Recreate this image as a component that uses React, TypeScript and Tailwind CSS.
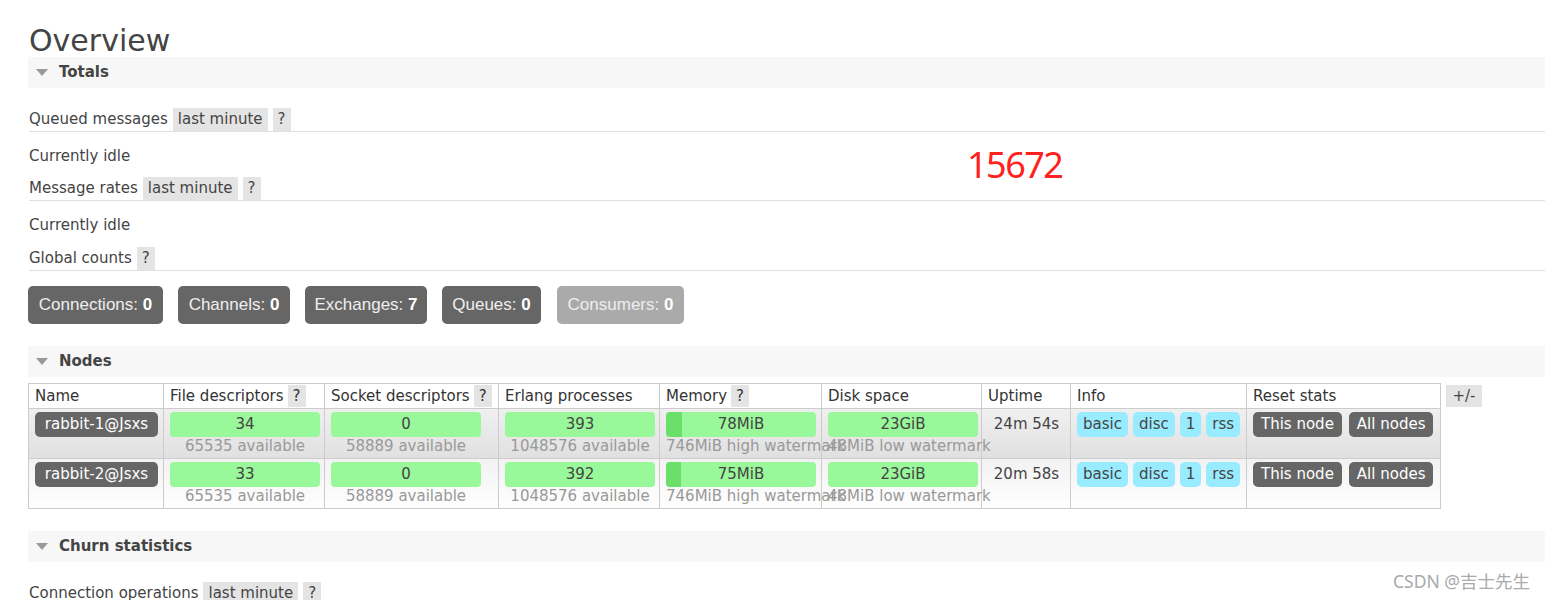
import React from "react";

const Tri = () => (
  <span className="inline-block w-0 h-0 border-l-[6.5px] border-r-[6.5px] border-t-[7px] border-l-transparent border-r-transparent border-t-[#999]" />
);

function SectionBar({ title, cls }: { title: string; cls: string }) {
  return (
    <div className={"flex items-center h-[31px] bg-[#f7f7f7] pl-[8px] " + cls}>
      <Tri />
      <span className="ml-[11px] font-bold text-[#444]">{title}</span>
    </div>
  );
}

function Chip({ children }: { children: React.ReactNode }) {
  return (
    <span className="ml-[5px] h-[23px] px-[5px] bg-[#e4e4e4] flex items-center">
      {children}
    </span>
  );
}

function LabelRow({ label, minute, cls }: { label: string; minute: boolean; cls: string }) {
  return (
    <div className={"flex items-center h-[24px] border-b border-[#e0e0e0] " + cls}>
      <span>{label}</span>
      {minute && <Chip>last minute</Chip>}
      <Chip>?</Chip>
    </div>
  );
}

function CountBtn({ label, value, cls }: { label: string; value: string; cls: string }) {
  return (
    <div
      className={
        "h-[38px] rounded-[5px] flex items-center justify-center text-[17px] text-[#eee] font-['Liberation_Sans',Arial,sans-serif] " +
        cls
      }
    >
      <span>
        {label}: <b className="text-white">{value}</b>
      </span>
    </div>
  );
}

function Bar({ value, sub, dark }: { value: string; sub: string; dark?: number }) {
  return (
    <div className="w-[150px]">
      <div className="relative h-[25px] rounded-[4px] bg-[#99f899] overflow-hidden flex items-center justify-center text-[#444]">
        {dark ? (
          <div className="absolute left-0 top-0 bottom-0 bg-[#6ae06a]" style={{ width: dark }} />
        ) : null}
        <span className="relative">{value}</span>
      </div>
      <div className="text-center whitespace-nowrap text-[#999] leading-[19px]">{sub}</div>
    </div>
  );
}

function Badge({ children, cls }: { children: React.ReactNode; cls: string }) {
  return (
    <span className={"h-[25px] rounded-[5px] flex items-center justify-center " + cls}>{children}</span>
  );
}

function HelpBox() {
  return <span className="ml-[4px] h-[22px] px-[5px] bg-[#e4e4e4] inline-flex items-center">?</span>;
}

type Node = {
  name: string;
  fd: string;
  proc: string;
  mem: string;
  dark: number;
  uptime: string;
  rowCls: string;
};

const nodes: Node[] = [
  {
    name: "rabbit-1@Jsxs",
    fd: "34",
    proc: "393",
    mem: "78MiB",
    dark: 16,
    uptime: "24m 54s",
    rowCls: "bg-linear-to-b from-[#f0f0f0] to-[#e0e0e0]",
  },
  {
    name: "rabbit-2@Jsxs",
    fd: "33",
    proc: "392",
    mem: "75MiB",
    dark: 15,
    uptime: "20m 58s",
    rowCls: "bg-linear-to-b from-[#f2f2f2] to-[#ffffff]",
  },
];

const td = "border border-[#ccc] align-top pl-[6px] pr-[5px] pt-[3px] pb-[2px]";
const th = "border border-[#ccc] text-left font-normal h-[25px] pl-[6px] p-0 text-[#333] whitespace-nowrap";

export default function App() {
  return (
    <div className="relative w-full h-[600px] overflow-hidden bg-white text-[15px] text-[#444] font-['DejaVu_Sans',Verdana,sans-serif]">
      <div className="ml-[28px] pt-[26px]">
        <h1 className="text-[30px] leading-[30px] h-[31px] pl-[1px] text-[#444]">Overview</h1>
        <SectionBar title="Totals" cls="" />

        <div className="pl-[1px]">
          <LabelRow label="Queued messages" minute={true} cls="mt-[20px]" />
          <div className="mt-[14px] h-[20px] leading-[20px]">Currently idle</div>
          <LabelRow label="Message rates" minute={true} cls="mt-[11px]" />
          <div className="mt-[14px] h-[20px] leading-[20px]">Currently idle</div>
          <LabelRow label="Global counts" minute={false} cls="mt-[12px]" />
        </div>

        <div className="flex mt-[15px]">
          <CountBtn label="Connections" value="0" cls="w-[135px] bg-[#666]" />
          <CountBtn label="Channels" value="0" cls="ml-[15px] w-[112px] bg-[#666]" />
          <CountBtn label="Exchanges" value="7" cls="ml-[15px] w-[122px] bg-[#666]" />
          <CountBtn label="Queues" value="0" cls="ml-[15px] w-[99px] bg-[#666]" />
          <CountBtn label="Consumers" value="0" cls="ml-[16px] w-[127px] bg-[#aaa]" />
        </div>

        <SectionBar title="Nodes" cls="mt-[22px]" />

        <div className="flex items-start mt-[6px]">
          <table className="table-fixed border-collapse w-[1412px]">
            <colgroup>
              <col className="w-[135px]" />
              <col className="w-[161px]" />
              <col className="w-[174px]" />
              <col className="w-[161px]" />
              <col className="w-[162px]" />
              <col className="w-[160px]" />
              <col className="w-[89px]" />
              <col className="w-[176px]" />
              <col className="w-[194px]" />
            </colgroup>
            <thead>
              <tr className="bg-white">
                <th className={th}>Name</th>
                <th className={th}>
                  File descriptors<HelpBox />
                </th>
                <th className={th}>
                  Socket descriptors<HelpBox />
                </th>
                <th className={th}>Erlang processes</th>
                <th className={th}>
                  Memory<HelpBox />
                </th>
                <th className={th}>Disk space</th>
                <th className={th}>Uptime</th>
                <th className={th}>Info</th>
                <th className={th}>Reset stats</th>
              </tr>
            </thead>
            <tbody>
              {nodes.map((n) => (
                <tr key={n.name} className={n.rowCls}>
                  <td className={td}>
                    <div className="h-[25px] rounded-[5px] bg-[#666] text-white flex items-center justify-center">
                      {n.name}
                    </div>
                  </td>
                  <td className={td}>
                    <Bar value={n.fd} sub="65535 available" />
                  </td>
                  <td className={td}>
                    <Bar value="0" sub="58889 available" />
                  </td>
                  <td className={td}>
                    <Bar value={n.proc} sub="1048576 available" />
                  </td>
                  <td className={td}>
                    <Bar value={n.mem} sub="746MiB high watermark" dark={n.dark} />
                  </td>
                  <td className={td}>
                    <Bar value="23GiB" sub="48MiB low watermark" />
                  </td>
                  <td className={td + " text-center leading-[25px]"}>{n.uptime}</td>
                  <td className={td}>
                    <div className="flex gap-[5px]">
                      <Badge cls="px-[6px] bg-[#99ebff]">basic</Badge>
                      <Badge cls="px-[6px] bg-[#99ebff]">disc</Badge>
                      <Badge cls="px-[6px] bg-[#99ebff]">1</Badge>
                      <Badge cls="px-[6px] bg-[#99ebff]">rss</Badge>
                    </div>
                  </td>
                  <td className={td}>
                    <div className="flex gap-[7px]">
                      <Badge cls="px-[8px] bg-[#666] text-white">This node</Badge>
                      <Badge cls="px-[8px] bg-[#666] text-white">All nodes</Badge>
                    </div>
                  </td>
                </tr>
              ))}
            </tbody>
          </table>
          <span className="ml-[5px] mt-[2px] h-[22px] w-[36px] bg-[#e4e4e4] flex items-center justify-center">
            +/-
          </span>
        </div>

        <SectionBar title="Churn statistics" cls="mt-[22px]" />
        <div className="pl-[1px]">
          <LabelRow label="Connection operations" minute={true} cls="mt-[20px]" />
        </div>
      </div>

      <div className="absolute left-[967px] top-[143px] text-[36px] leading-[44px] tracking-[-1.5px] text-[#ff2020] font-['Noto_Sans',sans-serif]">
        15672
      </div>
      <div className="absolute left-[1393px] top-[570px] text-[17.5px] leading-[22px] text-[#aaa] font-['Noto_Sans','Noto_Sans_CJK_SC',sans-serif]">
        CSDN @吉士先生
      </div>
    </div>
  );
}
